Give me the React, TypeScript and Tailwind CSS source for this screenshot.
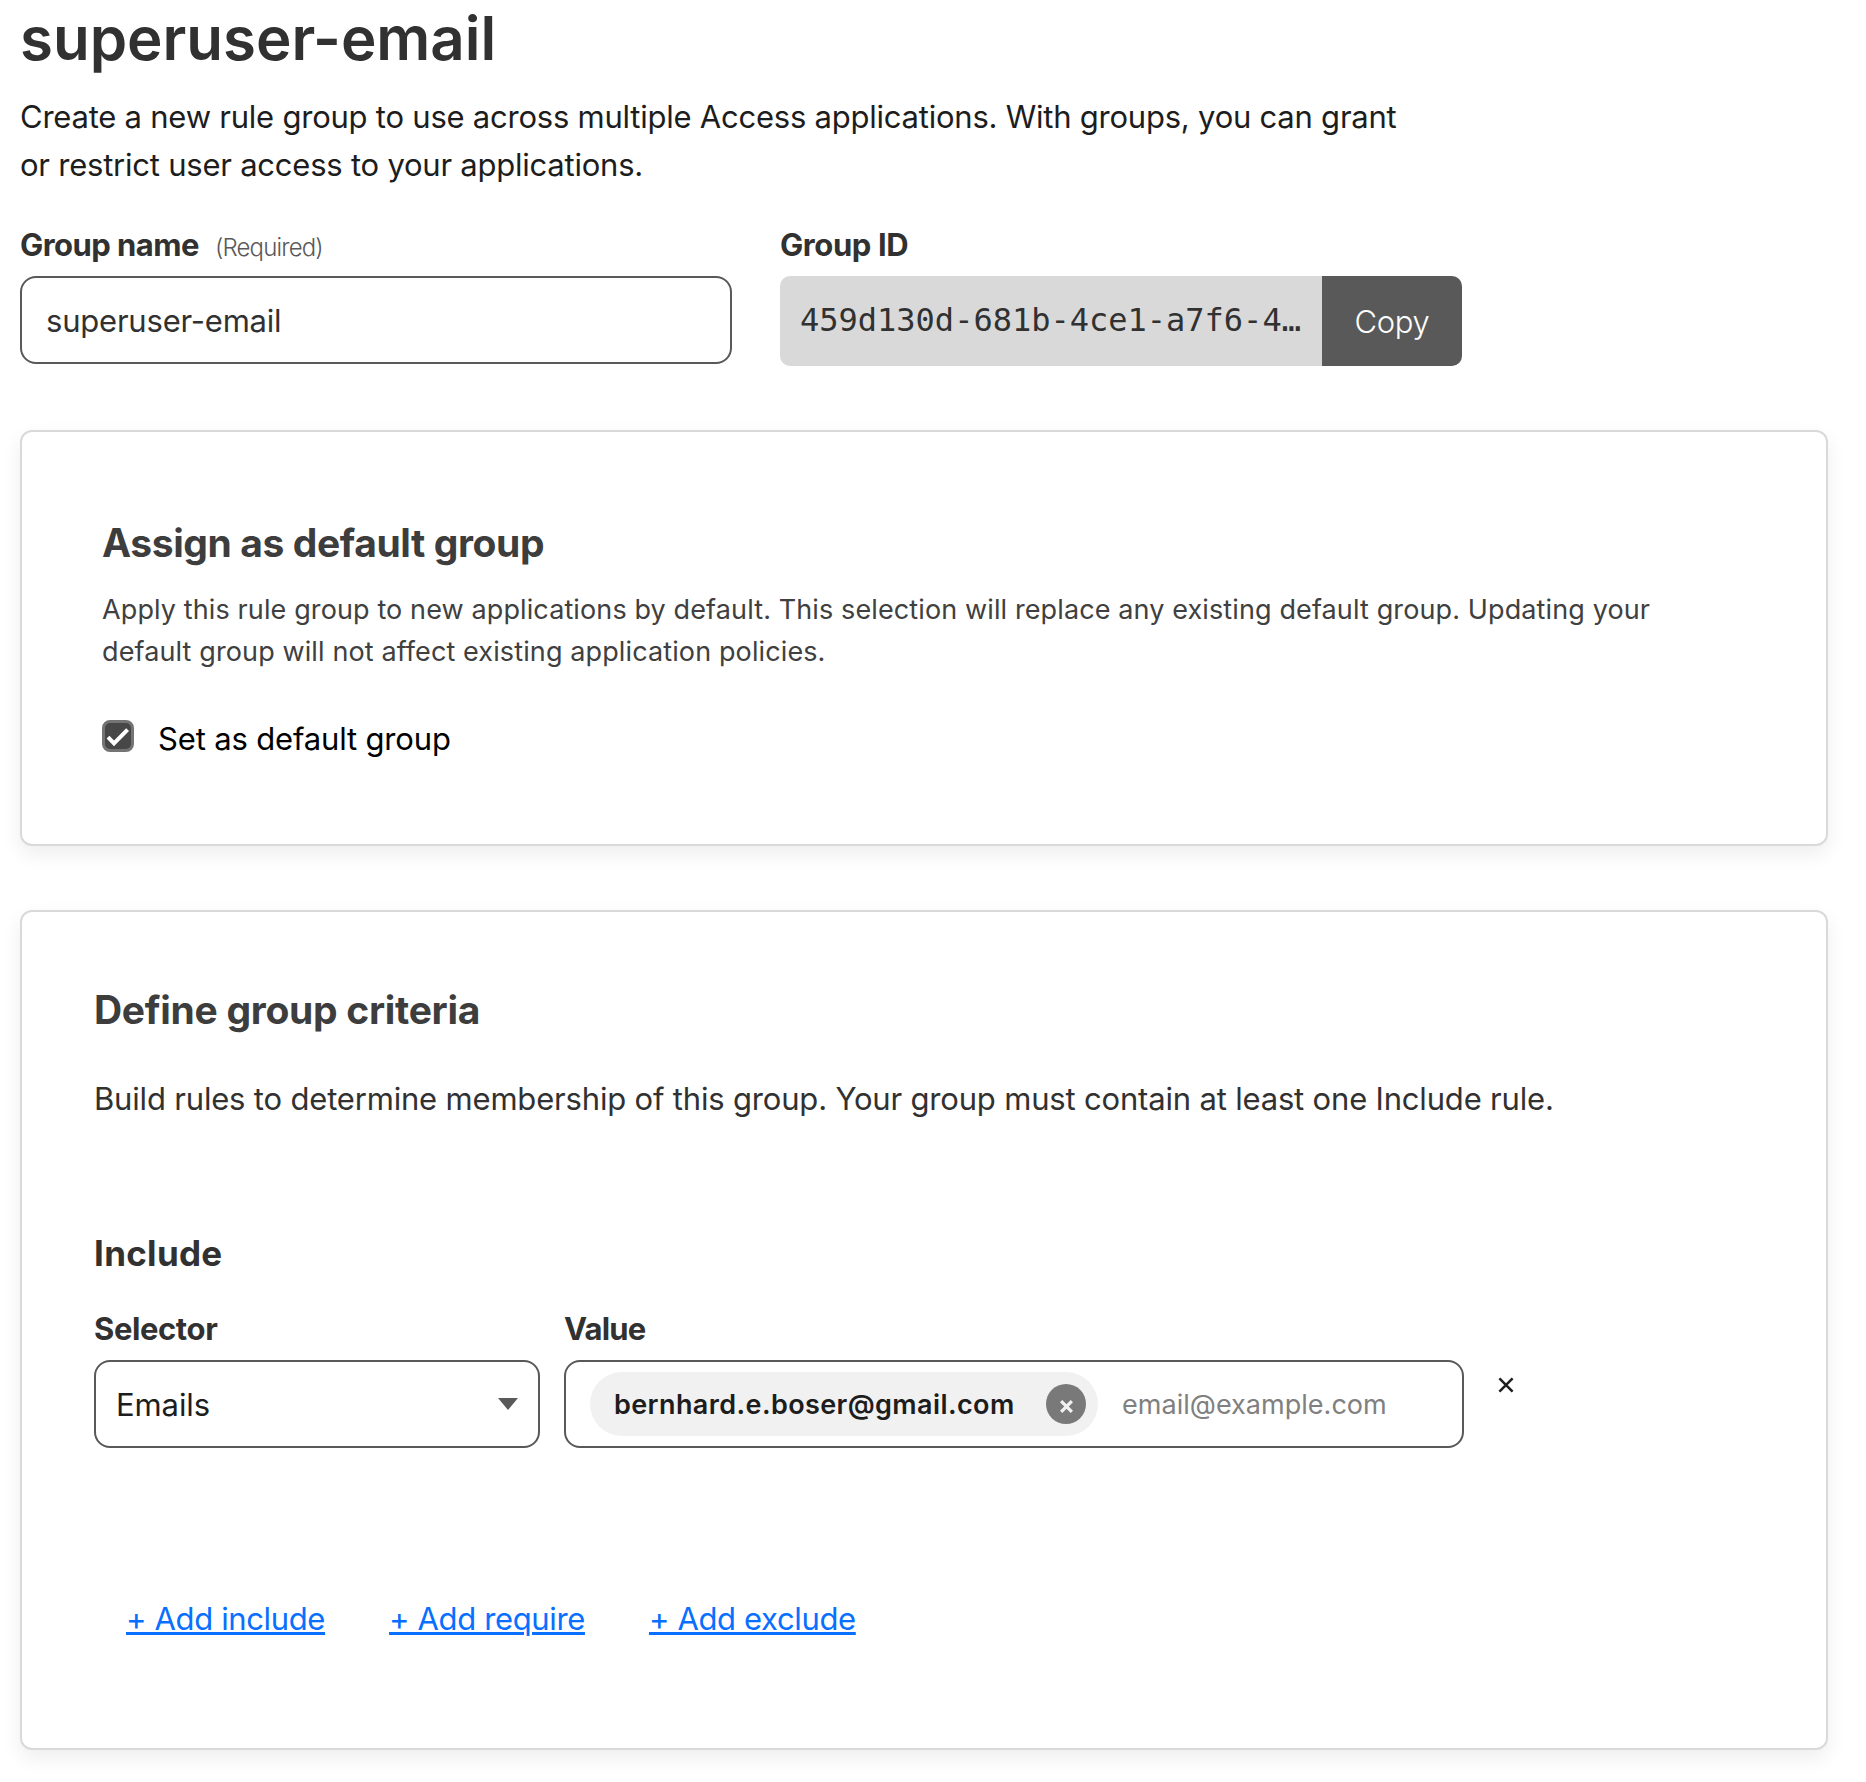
import type { ReactNode } from "react";

function Card({ className, children }: { className: string; children: ReactNode }) {
  return (
    <section
      className={`w-[1808px] rounded-xl border-2 border-[#d9d9d9] bg-white shadow-[0_8px_20px_rgba(0,20,15,0.07)] ${className}`}
    >
      {children}
    </section>
  );
}

function FieldLabel({ className = "", children }: { className?: string; children: ReactNode }) {
  return (
    <span className={`text-[31px] leading-[37px] font-[660] text-[#313131] ${className}`}>{children}</span>
  );
}

function Cross({ className, strokeWidth }: { className: string; strokeWidth: number }) {
  return (
    <svg viewBox="0 0 16 16" className={className} fill="none" stroke="currentColor" strokeWidth={strokeWidth}>
      <path d="M1.4 1.4 14.6 14.6M14.6 1.4 1.4 14.6" />
    </svg>
  );
}

const ruleActions = ["+ Add include", "+ Add require", "+ Add exclude"];

export default function App() {
  return (
    <main className="flex min-h-[1782px] flex-col items-start bg-white pl-5 font-['Inter',sans-serif]">
      <h1 className="text-[60px] leading-[76px] font-[630] tracking-[-0.02px] text-[#313131]">superuser-email</h1>
      <p className="mt-[17px] w-[1400px] text-[31px] leading-[48px] tracking-[-0.23px] text-[#1d1d1d]">
        Create a new rule group to use across multiple Access applications. With groups, you can grant or restrict
        user access to your applications.
      </p>

      <div className="mt-[37px] flex gap-12">
        <div className="flex w-[712px] flex-col">
          <div className="flex items-baseline gap-4">
            <FieldLabel className="tracking-[-0.55px]">Group name</FieldLabel>
            <span className="text-[24px] leading-[30px] font-light tracking-[-0.83px] text-[#595959]">(Required)</span>
          </div>
          <div className="mt-[13px] flex h-[88px] items-center rounded-2xl border-2 border-[#595959] pl-6 text-[31px] leading-[37px] tracking-[-0.21px] text-[#313131]">
            superuser-email
          </div>
        </div>
        <div className="flex w-[682px] flex-col">
          <FieldLabel className="tracking-[-0.4px]">Group ID</FieldLabel>
          <div className="mt-[13px] flex h-[90px] overflow-hidden rounded-[10px]">
            <div className="flex flex-1 items-center bg-[#d9d9d9] pb-[3px] pl-5 font-['DejaVu_Sans_Mono',monospace] text-[32px] leading-[38px] text-[#313131]">
              459d130d-681b-4ce1-a7f6-4…
            </div>
            <button className="w-[140px] bg-[#595959] text-[31px] leading-[37px] font-light tracking-[-0.33px] text-white">
              Copy
            </button>
          </div>
        </div>
      </div>

      <Card className="mt-16 px-20 pt-20 pb-[87px]">
        <h2 className="text-[39px] leading-[61px] font-[650] tracking-[-0.4px] text-[#3d3d3d]">
          Assign as default group
        </h2>
        <p className="mt-4 w-[1600px] text-[27px] leading-[42px] tracking-[0.115px] text-[#404040]">
          Apply this rule group to new applications by default. This selection will replace any existing default
          group. Updating your default group will not affect existing application policies.
        </p>
        <label className="mt-[47px] flex items-start gap-6">
          <span className="size-8 rounded-lg border-[3px] border-[#747474] bg-[#474747]">
            <svg viewBox="3 3 26 26" className="size-[26px]" fill="none" stroke="white" strokeWidth="4">
              <path d="M6 17.2 12 23.3 25.6 9.7" />
            </svg>
          </span>
          <span className="text-[31px] leading-[37px] tracking-[-0.16px] text-black">Set as default group</span>
        </label>
      </Card>

      <Card className="mt-16 px-[72px] pt-[72px] pb-[111px]">
        <h2 className="text-[39px] leading-[51px] font-[650] tracking-[-0.3px] text-[#3d3d3d]">
          Define group criteria
        </h2>
        <p className="mt-[45px] text-[31px] leading-[37px] tracking-[-0.18px] text-[#313131]">
          Build rules to determine membership of this group. Your group must contain at least one Include rule.
        </p>
        <h3 className="mt-[115px] text-[35px] leading-[42px] font-[650] tracking-[0.3px] text-[#313131]">Include</h3>

        <div className="mt-9 flex items-end">
          <div className="flex w-[446px] flex-col">
            <FieldLabel className="tracking-[-0.4px]">Selector</FieldLabel>
            <div className="mt-[13px] flex h-[88px] items-center justify-between rounded-2xl border-2 border-[#595959] px-5 text-[31px] leading-[37px] tracking-[-0.1px] text-[#1d1d1d]">
              Emails
              <svg viewBox="0 0 20 12" className="h-3 w-5 fill-[#595959]">
                <path d="M0 0H20L10 12Z" />
              </svg>
            </div>
          </div>
          <div className="ml-6 flex w-[900px] flex-col">
            <FieldLabel className="tracking-[-0.8px]">Value</FieldLabel>
            <div className="mt-[13px] flex h-[88px] items-center rounded-2xl border-2 border-[#595959] pl-6 text-[27px] leading-[33px]">
              <div className="flex h-16 w-[508px] items-center justify-between rounded-full bg-[#f1f1f1] pr-3 pl-6">
                <span className="font-semibold tracking-[0.4px] text-[#1d1d1d]">bernhard.e.boser@gmail.com</span>
                <span className="flex size-10 items-center justify-center rounded-full bg-[#797979] pt-[5px] text-[#f1f1f1]">
                  <Cross className="size-[13px]" strokeWidth={4} />
                </span>
              </div>
              <span className="ml-6 tracking-[0.03px] text-[#808080]">email@example.com</span>
            </div>
          </div>
          <Cross className="mb-[55px] ml-[34px] size-4 text-[#1d1d1d]" strokeWidth={2.5} />
        </div>

        <div className="mt-[152px] flex gap-16 pl-8">
          {ruleActions.map((action) => (
            <a
              key={action}
              href="#"
              className="text-[31px] leading-[37px] tracking-[-0.36px] text-[#086fff] underline decoration-[3px] underline-offset-2"
            >
              {action}
            </a>
          ))}
        </div>
      </Card>
    </main>
  );
}
